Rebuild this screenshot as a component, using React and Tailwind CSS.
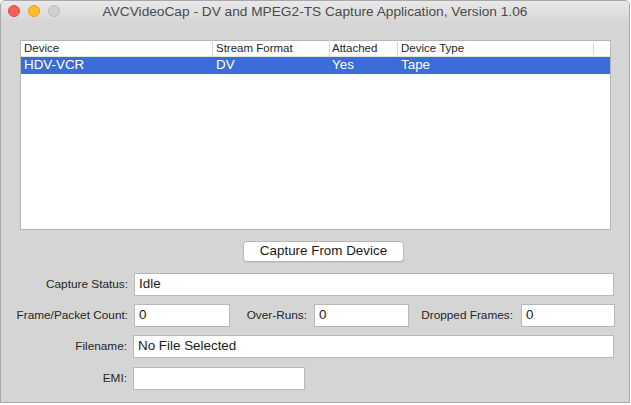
import React from 'react';

const Field = ({ value, className }) => (
  <div className={`h-[23px] bg-white border border-[#b8b8b8] flex items-center px-[4px] text-[13.4px] text-[#1a1a1a] ${className}`}>
    {value}
  </div>
);

const Label = ({ children, className }) => (
  <div className={`text-[11.8px] text-[#262626] text-right whitespace-nowrap pr-[1px] ${className}`}>{children}</div>
);

export default function App() {
  return (
    <div className="w-[631px] h-[405px] bg-white" style={{ fontFamily: '"Liberation Sans", Arial, sans-serif' }}>
      <div className="w-[630px] h-[403px] bg-[#d5d5d5] border border-[#a8a8a8] rounded-t-[5px] flex flex-col overflow-hidden">
        {/* title bar */}
        <div className="relative h-[22px] flex items-center justify-center bg-gradient-to-b from-[#e9e9e9] to-[#d5d5d5]">
          <div className="absolute left-[7px] top-[4px] flex gap-[8px]">
            <div className="w-[12px] h-[12px] rounded-full bg-[#fc5f57] border border-[#df4a42]" />
            <div className="w-[12px] h-[12px] rounded-full bg-[#fdbc2e] border border-[#dea22a]" />
            <div className="w-[12px] h-[12px] rounded-full bg-[#d0d0d0] border border-[#b9b9b9]" />
          </div>
          <span className="text-[13.7px] text-[#4a4a4a]">AVCVideoCap - DV and MPEG2-TS Capture Application, Version 1.06</span>
        </div>

        {/* table */}
        <div className="mt-[17px] ml-[19px] w-[591px] h-[190px] bg-white border border-[#b5b5b5] flex flex-col">
          <div className="h-[16px] flex items-center text-[11.5px] text-[#262626] border-b border-[#e2e2e2]">
            <div className="w-[191px] pl-[3px]">Device</div>
            <div className="w-[117px] pl-[3px] border-l border-[#d8d8d8]">Stream Format</div>
            <div className="w-[68px] pl-[2px] border-l border-[#d8d8d8]">Attached</div>
            <div className="w-[196px] pl-[3px] border-l border-[#d8d8d8]">Device Type</div>
            <div className="flex-1 h-[12px] border-l border-[#d8d8d8]" />
          </div>
          <div className="h-[17px] flex items-center text-[13.4px] text-white bg-[#3b6dd6]">
            <div className="w-[191px] pl-[3px]">HDV-VCR</div>
            <div className="w-[117px] pl-[4px]">DV</div>
            <div className="w-[68px] pl-[3px]">Yes</div>
            <div className="w-[196px] pl-[4px]">Tape</div>
          </div>
        </div>

        {/* button */}
        <div className="mt-[11px] flex justify-center">
          <div className="ml-[17px] w-[161px] h-[21px] bg-white border border-[#b8b8b8] rounded-[4px] shadow-[0_1px_0_rgba(0,0,0,0.08)] flex items-center justify-center text-[13.4px] text-[#1a1a1a]">
            Capture From Device
          </div>
        </div>

        {/* fields */}
        <div className="mt-[11px] flex items-center">
          <Label className="w-[128px]">Capture Status:</Label>
          <Field value="Idle" className="ml-[5px] w-[480px]" />
        </div>
        <div className="mt-[8px] flex items-center">
          <Label className="w-[128px]">Frame/Packet Count:</Label>
          <Field value="0" className="ml-[5px] w-[96px]" />
          <Label className="w-[80px] pr-[3px]">Over-Runs:</Label>
          <Field value="0" className="ml-[4px] w-[95px]" />
          <Label className="w-[107px] pr-[3px]">Dropped Frames:</Label>
          <Field value="0" className="ml-[5px] w-[94px]" />
        </div>
        <div className="mt-[8px] flex items-center">
          <Label className="w-[127px]">Filename:</Label>
          <Field value="No File Selected" className="ml-[5px] w-[481px]" />
        </div>
        <div className="mt-[9px] flex items-center">
          <Label className="w-[127px]">EMI:</Label>
          <Field value="" className="ml-[5px] w-[172px]" />
        </div>
      </div>
    </div>
  );
}
